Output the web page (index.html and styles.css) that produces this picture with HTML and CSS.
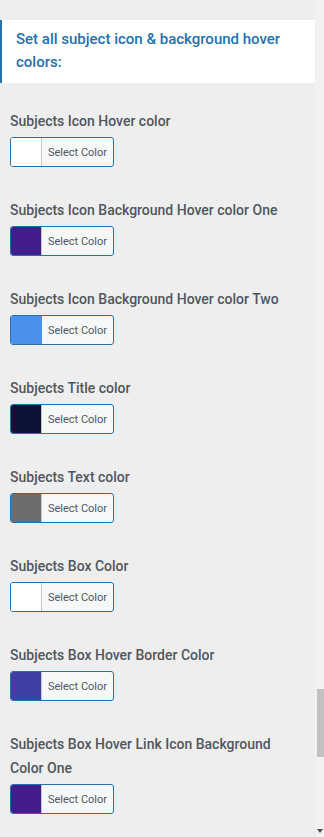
FILE: index.html
```html
<!DOCTYPE html>
<html>
<head>
    <link rel="stylesheet" href="styles.css">
    <title>Subject colors</title>
</head>
<body>
    <div class="frame">
        <div class="panel">
            <div class="notice">Set all subject icon &amp; background hover colors:</div>

            <div class="field">
                <div class="field-label">Subjects Icon Hover color</div>
                <button class="color-btn"><span class="swatch sw-white"></span><span class="btn-text">Select Color</span></button>
            </div>
            <div class="field">
                <div class="field-label">Subjects Icon Background Hover color One</div>
                <button class="color-btn"><span class="swatch sw-purple"></span><span class="btn-text">Select Color</span></button>
            </div>
            <div class="field">
                <div class="field-label">Subjects Icon Background Hover color Two</div>
                <button class="color-btn"><span class="swatch sw-blue"></span><span class="btn-text">Select Color</span></button>
            </div>
            <div class="field">
                <div class="field-label">Subjects Title color</div>
                <button class="color-btn"><span class="swatch sw-navy"></span><span class="btn-text">Select Color</span></button>
            </div>
            <div class="field">
                <div class="field-label">Subjects Text color</div>
                <button class="color-btn"><span class="swatch sw-gray"></span><span class="btn-text">Select Color</span></button>
            </div>
            <div class="field">
                <div class="field-label">Subjects Box Color</div>
                <button class="color-btn"><span class="swatch sw-white"></span><span class="btn-text">Select Color</span></button>
            </div>
            <div class="field">
                <div class="field-label">Subjects Box Hover Border Color</div>
                <button class="color-btn"><span class="swatch sw-indigo"></span><span class="btn-text">Select Color</span></button>
            </div>
            <div class="field">
                <div class="field-label">Subjects Box Hover Link Icon Background Color One</div>
                <button class="color-btn"><span class="swatch sw-purple"></span><span class="btn-text">Select Color</span></button>
            </div>
        </div>
        <div class="scrollbar">
            <div class="thumb"></div>
            <div class="arrow"></div>
        </div>
    </div>
</body>
</html>
```

FILE: styles.css
```css
body {
    margin: 0;
    background-color: #eeeeee;
    font-family: Roboto, "Liberation Sans", sans-serif;
}
.frame {
    display: flex;
    height: 837px;
    overflow: hidden;
}
.panel {
    width: 315px;
    flex: none;
}
.notice {
    margin-top: 20px;
    background-color: #ffffff;
    border-left: 2px solid #2271b1;
    padding: 8px 10px 9px 14px;
    font-size: 15px;
    line-height: 23px;
    font-weight: 500;
    color: #2271b1;
}
.field {
    display: flex;
    flex-direction: column;
    align-items: flex-start;
    padding-left: 10px;
    margin-bottom: 31px;
}
.notice + .field {
    margin-top: 26px;
}
.field-label {
    font-size: 14px;
    line-height: 24px;
    font-weight: 500;
    color: #50575e;
    margin-bottom: 4px;
    padding-right: 30px;
}
.color-btn {
    display: flex;
    align-items: stretch;
    height: 30px;
    width: 104px;
    padding: 0;
    border: 1px solid #2271b1;
    border-radius: 3px;
    background-color: #f6f7f7;
    overflow: hidden;
    font-family: inherit;
}
.swatch {
    width: 30px;
    flex: none;
    border-right: 1px solid #c3c4c7;
}
.btn-text {
    flex: 1;
    display: flex;
    align-items: center;
    justify-content: center;
    font-size: 11px;
    color: #50575e;
}
.sw-white { background-color: #ffffff; }
.sw-purple { background-color: #431d8c; }
.sw-blue { background-color: #4a90ec; border-right-color: #4a90ec; }
.sw-navy { background-color: #0b1437; }
.sw-gray { background-color: #6d6d6d; }
.sw-indigo { background-color: #3f3fa6; }
.scrollbar {
    width: 9px;
    flex: none;
    background-color: #f1f1f1;
    display: flex;
    flex-direction: column;
}
.thumb {
    margin-top: 689px;
    height: 68px;
    margin-left: 2px;
    background-color: #c1c1c1;
}
.arrow {
    margin-top: auto;
    margin-bottom: 4px;
    margin-left: 2px;
    width: 0;
    height: 0;
    border-left: 3px solid transparent;
    border-right: 3px solid transparent;
    border-top: 4px solid #505050;
}
```
